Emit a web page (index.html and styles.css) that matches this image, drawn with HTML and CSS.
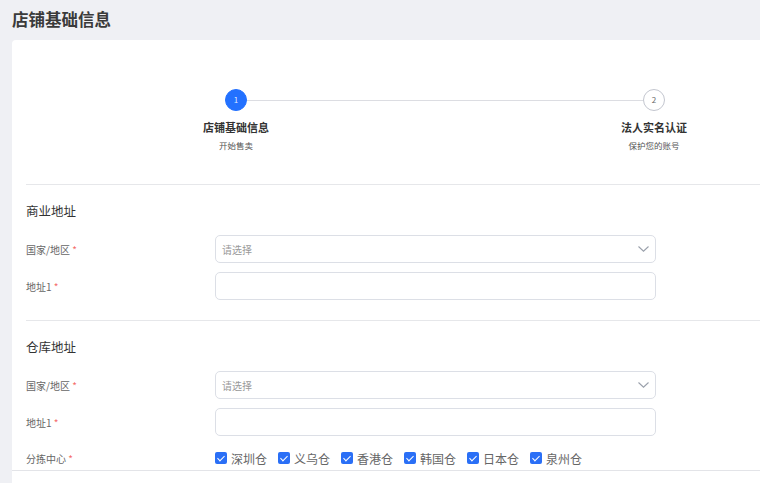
FILE: index.html
```html
<!doctype html>
<html lang="zh-CN">
  <head>
    <meta charset="UTF-8" />
    <meta name="viewport" content="width=device-width, initial-scale=1.0" />
    <title>店铺基础信息</title>
    <link rel="stylesheet" href="styles.css">
  </head>
  <body>
    <h1 class="page-title">店铺基础信息</h1>
    <div class="card">
      <div class="stepper">
        <div class="step active">
          <div class="step-circle">1</div>
          <div class="step-title">店铺基础信息</div>
          <div class="step-desc">开始售卖</div>
        </div>
        <div class="step-line"></div>
        <div class="step">
          <div class="step-circle">2</div>
          <div class="step-title">法人实名认证</div>
          <div class="step-desc">保护您的账号</div>
        </div>
      </div>

      <div class="section">
        <h2>商业地址</h2>
        <div class="form-row">
          <label>国家/地区 <span class="req">*</span></label>
          <div class="select">
            <span class="placeholder">请选择</span>
            <svg width="11" height="6" viewBox="0 0 11 6"><path d="M0.5 0.5 L5.5 5.2 L10.5 0.5" fill="none" stroke="#9aa0ab" stroke-width="1.1"/></svg>
          </div>
        </div>
        <div class="form-row">
          <label>地址1 <span class="req">*</span></label>
          <input type="text" class="input" />
        </div>
      </div>

      <div class="section">
        <h2>仓库地址</h2>
        <div class="form-row">
          <label>国家/地区 <span class="req">*</span></label>
          <div class="select">
            <span class="placeholder">请选择</span>
            <svg width="11" height="6" viewBox="0 0 11 6"><path d="M0.5 0.5 L5.5 5.2 L10.5 0.5" fill="none" stroke="#9aa0ab" stroke-width="1.1"/></svg>
          </div>
        </div>
        <div class="form-row">
          <label>地址1 <span class="req">*</span></label>
          <input type="text" class="input" />
        </div>
        <div class="form-row">
          <label>分拣中心 <span class="req">*</span></label>
          <div class="checks">
            <span class="check"><i class="box"></i>深圳仓</span>
            <span class="check"><i class="box"></i>义乌仓</span>
            <span class="check"><i class="box"></i>香港仓</span>
            <span class="check"><i class="box"></i>韩国仓</span>
            <span class="check"><i class="box"></i>日本仓</span>
            <span class="check"><i class="box"></i>泉州仓</span>
          </div>
        </div>
      </div>
    </div>
    <div class="footer"></div>
  </body>
</html>
```
FILE: styles.css
```css
body {
  margin: 0;
  background-color: #eff0f4;
  font-family: "Noto Sans CJK SC", "Noto Sans", sans-serif;
  color: #333;
  overflow: hidden;
}
.page-title {
  margin: 0;
  padding: 8px 12px 0;
  height: 32px;
  font-size: 16.5px;
  line-height: 22px;
  font-weight: bold;
  color: #3a3a3a;
}
.card {
  margin-left: 12px;
  background: white;
  border-radius: 4px 0 0 0;
  padding-left: 14px;
  min-height: 460px;
}
.stepper {
  display: flex;
  width: 440px;
  margin-left: 199px;
  padding-top: 49px;
  height: 95px;
}
.step {
  width: 22px;
  display: flex;
  flex-direction: column;
  align-items: center;
  white-space: nowrap;
}
.step-circle {
  width: 22px;
  height: 22px;
  box-sizing: border-box;
  border-radius: 50%;
  border: 1px solid #c3c6cf;
  background: white;
  color: #666;
  font-size: 8px;
  line-height: 20px;
  text-align: center;
  flex-shrink: 0;
}
.step.active .step-circle {
  background: #2371ff;
  border-color: #2371ff;
  color: #dfe9ff;
}
.step-title {
  margin-top: 8px;
  font-size: 11px;
  line-height: 16px;
  font-weight: bold;
  color: #333;
}
.step-desc {
  margin-top: 4px;
  font-size: 8.5px;
  line-height: 12px;
  color: #555;
}
.step-line {
  flex: 1;
  height: 1px;
  margin-top: 11px;
  background: #dcdde2;
}
.section {
  border-top: 1px solid #e6e7ea;
  padding: 16px 0 20px;
}
.section h2 {
  margin: 0 0 14px;
  font-size: 12.5px;
  line-height: 20px;
  font-weight: normal;
  color: #333;
}
.form-row {
  display: flex;
  align-items: center;
  margin-bottom: 9px;
}
.form-row:last-child {
  margin-bottom: 0;
}
.form-row label {
  width: 189px;
  font-size: 10px;
  color: #666;
}
.req {
  color: #f56c6c;
}
.select,
.input {
  width: 441px;
  height: 28px;
  box-sizing: border-box;
  border: 1px solid #dcdfe6;
  border-radius: 5px;
  background: white;
}
.select {
  display: flex;
  align-items: center;
  justify-content: space-between;
  padding: 0 6px 0 6px;
}
.placeholder {
  font-size: 10px;
  color: #999;
}
.checks {
  display: flex;
  align-items: center;
  height: 26px;
}
.check {
  display: flex;
  align-items: center;
  margin-right: 11px;
  font-size: 12px;
  color: #666;
}
.box {
  width: 12px;
  height: 12px;
  border-radius: 2px;
  background: #2a6ff6;
  margin-right: 4px;
  position: relative;
}
.box::after {
  content: "";
  position: absolute;
  left: 4px;
  top: 2px;
  width: 3px;
  height: 6px;
  border: solid white;
  border-width: 0 1.5px 1.5px 0;
  transform: rotate(45deg);
}
.footer {
  position: fixed;
  left: 12px;
  right: 0;
  bottom: 0;
  height: 12px;
  background: white;
  border-top: 1px solid #e3e4e8;
}
```
